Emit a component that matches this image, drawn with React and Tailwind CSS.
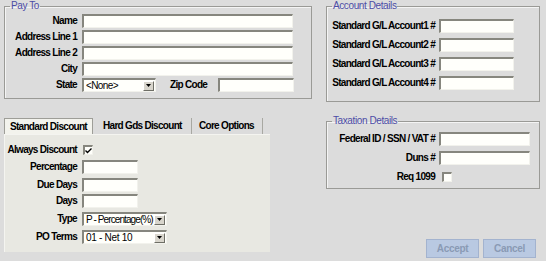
import React from "react";

const sunken =
  "bg-[#fffffb] border-t-2 border-l-2 border-b border-r border-t-[#86867e] border-l-[#86867e] border-b-[#f2f2ec] border-r-[#f2f2ec]";

const Label = ({ children, className = "" }) => (
  <span className={`font-bold text-[10px] leading-none tracking-[-0.7px] text-black whitespace-nowrap ${className}`}>
    {children}
  </span>
);

const Field = ({ className = "" }) => <div className={`${sunken} h-[14px] ${className}`} />;

const Select = ({ value, className = "", textClass = "tracking-[-0.4px]" }) => (
  <div className={`${sunken} h-[14px] flex items-center justify-between pl-[2px] pr-[1px] ${className}`}>
    <span className={`text-[10px] leading-none text-black whitespace-nowrap ${textClass}`}>{value}</span>
    <div className="w-[11px] h-[10px] shrink-0 bg-[#d8d5cc] border border-t-white border-l-white border-b-[#6e6e66] border-r-[#6e6e66] flex items-center justify-center">
      <svg width="5" height="3" viewBox="0 0 5 3">
        <path d="M0 0h5L2.5 3z" fill="#000" />
      </svg>
    </div>
  </div>
);

const Check = ({ checked, className = "" }) => (
  <div className={`${sunken} w-[10px] h-[10px] flex items-center justify-center ${className}`}>
    {checked && (
      <svg width="7" height="6" viewBox="0 0 7 6">
        <path d="M0.5 2.5l2 2 4-4" stroke="#000" strokeWidth="1.4" fill="none" />
      </svg>
    )}
  </div>
);

const Group = ({ title, className = "", children }) => (
  <fieldset className={`border border-[#9a9a96] shadow-[inset_1px_1px_0_#f4f4f4] ${className}`}>
    <legend className="ml-[5px] px-[1px] text-[10px] leading-[12px] tracking-[-0.4px] text-[#4d4da6]">{title}</legend>
    {children}
  </fieldset>
);

const Row = ({ label, children, labelW = "w-[72px]", gap = "ml-[5px]", className = "" }) => (
  <div className={`flex items-center h-[14px] ${className}`}>
    <Label className={`${labelW} text-right`}>{label}</Label>
    <div className={`${gap} flex items-center`}>{children}</div>
  </div>
);

export default function App() {
  return (
    <div
      className="w-[546px] h-[261px] bg-[#dcdcdc] flex pl-[4px] overflow-hidden"
      style={{ fontFamily: '"Liberation Sans", Arial, sans-serif' }}
    >
      {/* left column */}
      <div className="w-[308px] flex flex-col">
        <Group title="Pay To" className="h-[99px] w-[308px]">
          <div className="pt-[2px] flex flex-col gap-[2px]">
            <Row label="Name"><Field className="w-[211px]" /></Row>
            <Row label="Address Line 1"><Field className="w-[211px]" /></Row>
            <Row label="Address Line 2"><Field className="w-[211px]" /></Row>
            <Row label="City"><Field className="w-[211px]" /></Row>
            <Row label="State">
              <Select value="<None>" className="w-[74px]" textClass="tracking-[-0.6px]" />
              <Label className="ml-[14px] w-[40px]">Zip Code</Label>
              <Field className="ml-[8px] w-[76px]" />
            </Row>
          </div>
        </Group>

        <div className="mt-[19px] w-[266px]">
          <div className="flex h-[16px] items-end">
            <div className="w-[89px] h-[16px] bg-[#f3f3ed] border-t border-l border-r border-[#9e9e98] flex items-center pl-[5px]">
              <Label className="tracking-[-0.5px]">Standard Discount</Label>
            </div>
            <div className="w-[99px] h-[16px] border-r border-[#a8a8a2] flex items-center pl-[10px]">
              <Label className="tracking-[-0.5px]">Hard Gds Discount</Label>
            </div>
            <div className="w-[71px] h-[16px] border-r border-[#a8a8a2] flex items-center pl-[7px]">
              <Label className="tracking-[-0.4px]">Core Options</Label>
            </div>
          </div>
          <div className="h-[118px] bg-[#e8e8e2] border-l border-t border-[#f4f4f0] pt-[10px]">
            <div className="flex items-center h-[10px]">
              <Label className="w-[72px] text-right">Always Discount</Label>
              <Check checked className="ml-[6px]" />
            </div>
            <Row label="Percentage" className="mt-[5px]"><Field className="w-[56px]" /></Row>
            <Row label="Due Days" className="mt-[4px]"><Field className="w-[56px]" /></Row>
            <Row label="Days" className="mt-[2px]"><Field className="w-[56px]" /></Row>
            <Row label="Type" className="mt-[4px]">
              <Select value="P - Percentage(%)" className="w-[85px]" textClass="tracking-[-0.9px]" />
            </Row>
            <Row label="PO Terms" className="mt-[4px]">
              <Select value="01 - Net 10" className="w-[85px]" textClass="tracking-[-0.3px]" />
            </Row>
          </div>
        </div>
      </div>

      {/* right column */}
      <div className="ml-[14px] w-[214px] flex flex-col">
        <Group title="Account Details" className="h-[102px] w-[214px]">
          <div className="pt-[7px] flex flex-col gap-[5px]">
            {[1, 2, 3, 4].map((n) => (
              <Row key={n} label={`Standard G/L Account${n} #`} labelW="w-[108px]" gap="ml-[4px]">
                <Field className="w-[75px]" />
              </Row>
            ))}
          </div>
        </Group>

        <Group title="Taxation Details" className="mt-[13px] h-[74px] w-[214px]">
          <div className="pt-[5px] flex flex-col gap-[5px]">
            <Row label="Federal ID / SSN / VAT #" labelW="w-[108px]" gap="ml-[4px]">
              <Field className="w-[91px]" />
            </Row>
            <Row label="Duns #" labelW="w-[108px]" gap="ml-[4px]">
              <Field className="w-[91px]" />
            </Row>
            <Row label="Req 1099" labelW="w-[108px]" gap="ml-[7px]">
              <Check />
            </Row>
          </div>
        </Group>

        <div className="mt-[50px] ml-[100px] flex gap-[4px]">
          {["Accept", "Cancel"].map((t) => (
            <div
              key={t}
              className="w-[53px] h-[19px] bg-[#b9c9e2] border border-[#a3b3cf] flex items-center justify-center text-[10px] font-bold tracking-[-0.3px] text-[#8a9ab4]"
            >
              {t}
            </div>
          ))}
        </div>
      </div>
    </div>
  );
}
